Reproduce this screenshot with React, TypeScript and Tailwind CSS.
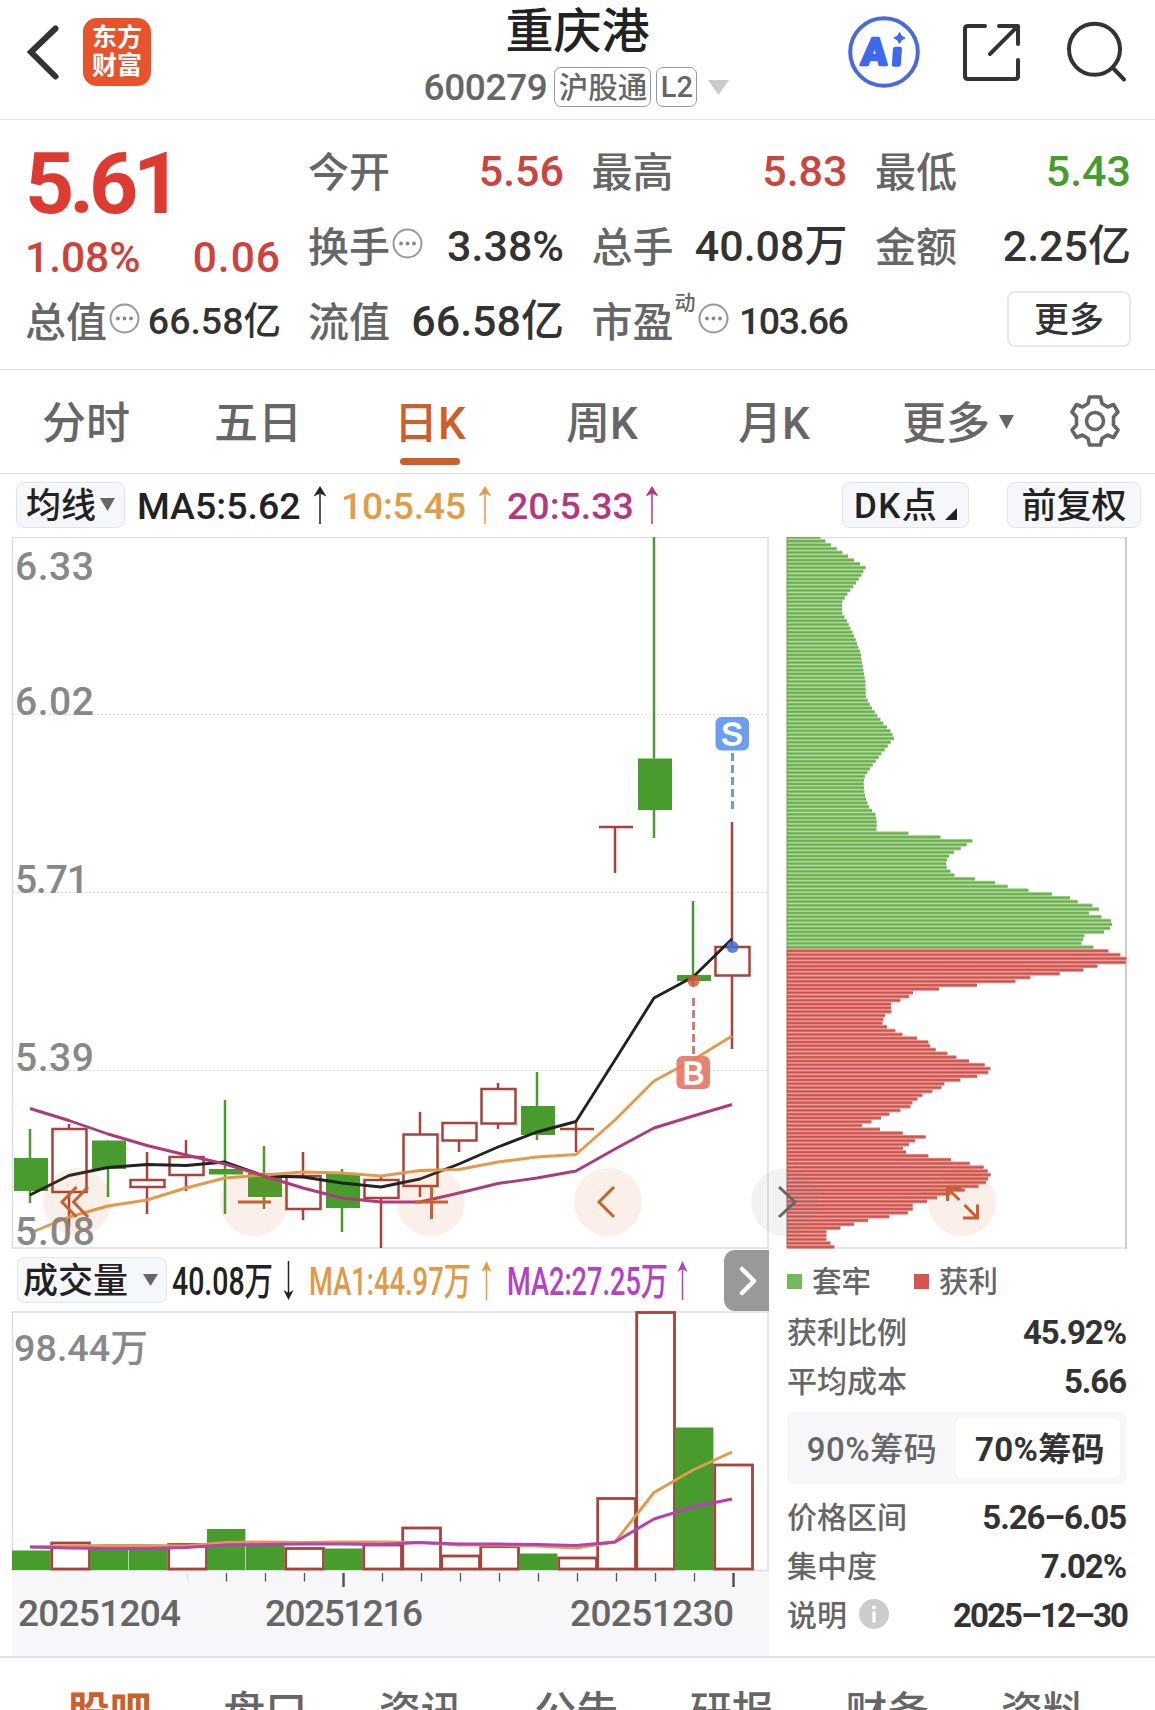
import type { ReactNode } from 'react';

const RED = '#a9423c';
const GREEN = '#489c2d';
const ORANGE = '#c9612f';

// open/close edges of the body and wick range, in chart pixels
const candles = [
  { up: false, top: 1158, bottom: 1191, high: 1129, low: 1203 },
  { up: true, top: 1129, bottom: 1192, high: 1124, low: 1227 },
  { up: false, top: 1140.5, bottom: 1169, high: 1140, low: 1197 },
  { up: true, top: 1180, bottom: 1187, high: 1152, low: 1214 },
  { up: true, top: 1157, bottom: 1175, high: 1140, low: 1191 },
  { up: false, top: 1169, bottom: 1174.5, high: 1100, low: 1214 },
  { up: false, top: 1173, bottom: 1197, high: 1146, low: 1209 },
  { up: true, top: 1176, bottom: 1209, high: 1152, low: 1220 },
  { up: false, top: 1174, bottom: 1208, high: 1169, low: 1232 },
  { up: true, top: 1180, bottom: 1198, high: 1175, low: 1248 },
  { up: true, top: 1134.5, bottom: 1186, high: 1112, low: 1197 },
  { up: true, top: 1123, bottom: 1140.5, high: 1123, low: 1152 },
  { up: true, top: 1089, bottom: 1123.5, high: 1083, low: 1129 },
  { up: false, top: 1106, bottom: 1135, high: 1072, low: 1140 },
  { up: true, top: 1129, bottom: 1129, high: 1123, low: 1152 },
  { up: true, top: 827, bottom: 827, high: 827, low: 873 },
  { up: false, top: 758.5, bottom: 810, high: 537, low: 838 },
  { up: false, top: 975, bottom: 981, high: 901, low: 986 },
  { up: true, top: 947, bottom: 975.5, high: 822, low: 1049 },
];

const ma5 = [1195, 1175.5, 1167.5, 1164.5, 1165.5, 1162, 1176, 1177, 1183, 1187, 1179, 1164, 1147, 1132, 1121.5, 1060, 998, 977, 939];
const ma10 = [1233, 1217, 1206, 1200, 1188, 1178, 1175, 1172, 1173, 1176, 1170.5, 1169.5, 1162, 1157, 1154.5, 1120, 1081, 1060, 1036];
const ma20 = [1108.5, 1120.5, 1134, 1145.5, 1155, 1164, 1176, 1188, 1198, 1202, 1202, 1193, 1183.5, 1178, 1171, 1149, 1128, 1116, 1104.5];

const volumes = [
  [0, 1550.5], [1, 1543], [0, 1546], [0, 1546], [1, 1544.5], [0, 1529], [0, 1545], [1, 1548.5], [0, 1548.5], [1, 1545],
  [1, 1528], [1, 1556], [1, 1546.5], [0, 1553.5], [1, 1558], [1, 1498.5], [1, 1312.5], [0, 1427.5], [1, 1465],
];
const volMa1 = [1547, 1546, 1545.5, 1545.5, 1546, 1542.5, 1542, 1542.5, 1542, 1542, 1542.5, 1545, 1545, 1546, 1548, 1542, 1492.5, 1470, 1452];
const volMa2 = [1547, 1548, 1548.5, 1548.5, 1547.5, 1545, 1544.5, 1544, 1544, 1544.5, 1542.5, 1544, 1544, 1544.5, 1545.5, 1542, 1519, 1507, 1499];

// chip distribution, one value per price step, top price first
const chips = [
  100, 115, 132, 149, 166, 183, 201, 219, 236, 229, 223, 215, 207, 198, 190, 181, 173, 166, 165, 165, 166, 172, 179, 185, 190, 196, 201,
  206, 210, 214, 218, 222, 223, 225, 227, 229, 231, 233, 235, 235, 236, 236, 237, 242, 248, 255, 263, 271, 280, 289, 300, 310, 316, 321,
  311, 302, 293, 283, 275, 266, 257, 249, 241, 234, 231, 230, 231, 232, 234, 237, 241, 246, 255, 265, 267, 269, 269, 268, 364, 460, 556,
  539, 521, 500, 486, 480, 477, 479, 490, 502, 564, 624, 662, 724, 795, 849, 872, 916, 936, 906, 943, 972, 975, 969, 951, 892, 888, 883,
  919, 964, 1000, 1018, 1016, 931, 889, 818, 730, 685, 570, 456, 378, 366, 340, 312, 312, 313, 294, 289, 286, 300, 325, 346, 390, 424,
  429, 446, 481, 508, 546, 593, 610, 603, 570, 520, 472, 463, 436, 406, 391, 376, 370, 340, 307, 282, 253, 225, 279, 347, 416, 384, 366,
  348, 357, 424, 492, 548, 590, 602, 611, 603, 597, 574, 533, 491, 450, 420, 377, 377, 362, 307, 243, 201, 160, 118, 118, 118, 130, 142,
];
const TRAPPED_COUNT = 109;

const cx = (i: number) => 30 + 39 * i;
const toPoints = (ys: number[]) => ys.map((y, i) => `${cx(i)},${y}`).join(' ');

function Arrow({ className = '' }: { className?: string }) {
  return (
    <svg width="14" height="38" viewBox="0 0 14 38" className={className}>
      <path d="M7 5V38" stroke="currentColor" strokeWidth="1.5" />
      <path d="M7 0L13.5 10.5L7 7.5L0.5 10.5Z" fill="currentColor" />
    </svg>
  );
}

function Dots() {
  return (
    <svg width="31" height="31" viewBox="0 0 31 31" className="shrink-0">
      <circle cx="15.5" cy="15.5" r="14" fill="none" stroke="#999" strokeWidth="2" />
      <circle cx="9" cy="15.5" r="1.9" fill="#888" />
      <circle cx="15.5" cy="15.5" r="1.9" fill="#888" />
      <circle cx="22" cy="15.5" r="1.9" fill="#888" />
    </svg>
  );
}

function Triangle({ className }: { className: string }) {
  return (
    <svg viewBox="0 0 16 13" preserveAspectRatio="none" className={className}>
      <path d="M0 0H16L8 13Z" fill="currentColor" />
    </svg>
  );
}

function Header() {
  return (
    <header className="h-[120px] border-b border-[#e3e3e3] flex relative">
      <svg width="36" height="60" viewBox="0 0 36 60" className="ml-[24px] mt-[22px]">
        <path d="M31.500 6.500L7 30L31.500 54.500" fill="none" stroke="#333" strokeWidth="6" strokeLinecap="round" />
      </svg>
      <div className="ml-[23px] mt-[18px] w-[68px] h-[68px] rounded-[14px] bg-[#e8532b] text-white text-[25px] leading-[28px] font-bold text-center pt-[6px]">
        东方<br />财富
      </div>
      <div className="absolute inset-x-0 top-0 pt-[2px] flex flex-col items-center pointer-events-none">
        <h1 className="text-[48px] leading-[60px] font-medium text-[#222]">重庆港</h1>
        <div className="flex items-center h-[50px] -ml-[2px] text-[#666] font-medium">
          <span className="text-[37px] tracking-[-0.4px] pt-[2px]">600279</span>
          <span className="ml-[7px] w-[97px] h-[40px] border-[1.5px] border-[#999] rounded-[7px] text-[29.5px] leading-[40px] text-center">沪股通</span>
          <span className="ml-[5px] w-[41px] h-[40px] border-[1.5px] border-[#999] rounded-[7px] text-[29px] leading-[39px] text-center">L2</span>
          <Triangle className="ml-[11px] w-[21px] h-[15px] text-[#ccc]" />
        </div>
      </div>
      <div className="ml-auto flex">
        <svg width="72" height="72" viewBox="0 0 72 72" className="mt-4">
          <circle cx="36" cy="36" r="33.8" fill="none" stroke="#4a6ad8" strokeWidth="4" />
          <g transform="skewX(-4)" fill="#3f68ee" stroke="#3f68ee" strokeWidth="2.500" strokeLinejoin="round">
            <text x="16" y="49" fontSize="38" fontWeight="900" fontFamily="Roboto" textLength="26" lengthAdjust="spacingAndGlyphs">A</text>
            <rect x="48.500" y="32" width="6.500" height="17.500" rx="1" />
          </g>
          <path d="M51.500 16.500L53.500 20L57 22L53.500 24L51.500 27.500L49.500 24L46 22L49.500 20Z" fill="#3f68ee" stroke="#3f68ee" />
        </svg>
        <svg width="60" height="60" viewBox="0 0 60 60" className="ml-[41px] mt-[22px]" fill="none" stroke="#333" strokeWidth="4" strokeLinecap="round" strokeLinejoin="round">
          <path d="M24 4H7Q4 4 4 7V54Q4 57 7 57H54Q57 57 57 54V38" />
          <path d="M38 4H57V22M56 5L29 32" />
        </svg>
        <svg width="64" height="64" viewBox="0 0 64 64" className="ml-[42px] mr-[28px] mt-[20px]" fill="none" stroke="#333" strokeWidth="4" strokeLinecap="round">
          <circle cx="31.500" cy="29.300" r="25.500" />
          <path d="M50 48L61 59.500" />
        </svg>
      </div>
    </header>
  );
}

function Stat({ label, value, color = 'text-[#333]', dots = false }: { label: string; value: string; color?: string; dots?: boolean }) {
  return (
    <div className="h-[75px] flex items-center">
      <span className="pt-[5px] text-[41px] text-[#666]">{label}</span>
      {dots && <span className="ml-[2px] -mt-[5px]"><Dots /></span>}
      <span className={`ml-auto pt-[2px] text-[43px] font-medium ${color}`}>{value}</span>
    </div>
  );
}

function Quote() {
  return (
    <section className="h-[250px] border-b border-[#e3e3e3] pt-[13px] pl-[25px] flex gap-[27px] leading-none whitespace-nowrap">
      <div className="w-[256px]">
        <div className="h-[94px] pt-[8px] flex items-center text-[86px] font-bold text-[#dd3b32] tracking-[-5.2px]">5.61</div>
        <div className="h-[56px] pt-[7px] flex items-center justify-between text-[42.5px] font-medium text-[#cf4139]">
          <span>1.08%</span>
          <span className="tracking-[1px]">0.06</span>
        </div>
        <div className="h-[75px] flex items-center">
          <span className="pt-[5px] text-[41px] font-medium text-[#666]">总值</span>
          <span className="ml-[2px] -mt-[5px]"><Dots /></span>
          <span className="ml-auto pt-[2px] text-[37.5px] font-medium text-[#333]">66.58亿</span>
        </div>
      </div>
      <div className="grid grid-cols-[256px_256px_256px] auto-rows-[75px] content-start gap-x-[27.5px] font-medium">
        <Stat label="今开" value="5.56" color="text-[#cb453e]" />
        <Stat label="最高" value="5.83" color="text-[#cb453e]" />
        <Stat label="最低" value="5.43" color="text-[#489c2d]" />
        <Stat label="换手" value="3.38%" dots />
        <Stat label="总手" value="40.08万" />
        <Stat label="金额" value="2.25亿" />
        <Stat label="流值" value="66.58亿" />
        <div className="h-[75px] flex items-center">
          <span className="pt-[5px] text-[41px] text-[#666]">市盈</span>
          <span className="text-[21px] text-[#666] ml-[1px] -mt-[35px]">动</span>
          <span className="ml-[2px] -mt-[5px]"><Dots /></span>
          <span className="ml-auto pt-[2px] text-[37.5px] text-[#333] tracking-[-1.4px]">103.66</span>
        </div>
        <div className="h-[75px] flex items-center justify-end">
          <button className="w-[124px] h-[56px] -mt-1 pt-[4px] border-2 border-[#e6e9ec] rounded-[8px] text-[35px] text-[#333]">更多</button>
        </div>
      </div>
    </section>
  );
}

function PeriodTabs() {
  const tabs = ['分时', '五日', '日K', '周K', '月K'];
  return (
    <nav className="h-[104px] border-b border-[#e3e3e3] flex items-stretch text-[44px] leading-none font-medium text-[#666]">
      {tabs.map(t => (
        <div key={t} className={t === '日K' ? 'w-[172px] pt-[4px] flex items-center justify-center relative text-[#cf5f2a]' : 'w-[172px] pt-[4px] flex items-center justify-center'}>
          {t}
          {t === '日K' && <span className="absolute left-[56px] bottom-[8px] w-[60px] h-[7px] rounded-full bg-[#cf5f2a]" />}
        </div>
      ))}
      <div className="ml-[42px] pt-[4px] flex items-center">
        更多<Triangle className="ml-[9px] mb-[4px] w-[15px] h-[14px] text-[#666]" />
      </div>
      <svg width="54" height="54" viewBox="-27 -27 54 54" className="ml-auto mr-[33px] mt-[24px]" fill="none" stroke="#666" strokeWidth="3.600" strokeLinejoin="round">
        <path d="M-5.500 -24H5.500L7 -17.500L12.500 -14L18.500 -16.500L23 -9L18.500 -4V4L23 9L18.500 16.500L12.500 14L7 17.500L5.500 24H-5.500L-7 17.500L-12.500 14L-18.500 16.500L-23 9L-18.500 4V-4L-23 -9L-18.500 -16.500L-12.500 -14L-7 -17.500Z" />
        <circle r="8.500" />
      </svg>
    </nav>
  );
}

function Pill({ className, children }: { className: string; children: ReactNode }) {
  return (
    <button className={`h-[46px] pt-[3px] shrink-0 flex items-center bg-[#f6f7fa] border-[1.5px] border-[#e1e5ea] rounded-[8px] text-[35px] leading-none font-medium text-[#222] ${className}`}>
      {children}
    </button>
  );
}

function MaBar() {
  return (
    <div className="h-[63px] pt-[8px] pl-4 flex items-start whitespace-nowrap">
      <Pill className="w-[109px] pl-[9px]">
        均线<Triangle className="ml-[4px] mb-[4px] w-[15px] h-[13px] text-[#666]" />
      </Pill>
      <div className="h-[46px] ml-[12px] flex items-center text-[37.5px] leading-none font-medium">
        <span className="w-[176px] pt-[3px] text-[#222]">MA5:5.62</span>
        <Arrow className="text-[#222]" />
        <span className="ml-[14px] pt-[3px] w-[137px] text-[#e39b45] tracking-[-0.3px]">10:5.45</span>
        <Arrow className="text-[#e39b45]" />
        <span className="ml-[15px] pt-[3px] w-[138px] text-[#b5387f]">20:5.33</span>
        <Arrow className="text-[#b5387f]" />
      </div>
      <Pill className="ml-auto w-[127px] pl-[11px]">
        <span className="tracking-[1.4px]">DK点</span>
        <svg width="12" height="12" viewBox="0 0 12 12" className="ml-[7px] mt-[15px]"><path d="M12 0V12H0Z" fill="#222" /></svg>
      </Pill>
      <Pill className="ml-[38px] mr-[14px] w-[134px] justify-center">前复权</Pill>
    </div>
  );
}

function KChart() {
  return (
    <svg width="778" height="712" viewBox="0 537 778 712" className="block shrink-0">
      <rect x="12.500" y="537.500" width="755.500" height="710.500" fill="none" stroke="#dedede" strokeWidth="1.500" />
      {[714.5, 892.5, 1070.5].map(y => (
        <path key={y} d={`M13 ${y}H768`} stroke="#dcdcdc" strokeDasharray="2 2" />
      ))}
      {candles.map((c, i) => {
        const x = cx(i);
        const color = c.up ? RED : GREEN;
        return (
          <g key={i} stroke={color} strokeWidth="2.500">
            <path d={`M${x} ${c.high}V${c.top}M${x} ${c.bottom}V${c.low}`} />
            {c.top === c.bottom
              ? <path d={`M${x - 16} ${c.top}H${x + 18}`} />
              : c.up
                ? <rect x={x - 16.5} y={c.top} width="34" height={c.bottom - c.top} fill="#fff" />
                : <rect x={x - 16} y={c.top} width="34" height={c.bottom - c.top} fill={GREEN} stroke="none" />}
          </g>
        );
      })}
      <g fill="none" strokeWidth="2.900" strokeLinejoin="round">
        <polyline points={toPoints(ma5)} stroke="#222" />
        <polyline points={toPoints(ma10)} stroke="#e09c4c" />
        <polyline points={toPoints(ma20)} stroke="#ad3a7f" />
      </g>
      <g fill="#888" fontSize="39" fontWeight="500">
        <text x="15" y="580" textLength="79">6.33</text>
        <text x="15" y="715" textLength="79">6.02</text>
        <text x="15" y="893" textLength="74">5.71</text>
        <text x="15" y="1071" textLength="79">5.39</text>
        <text x="15" y="1245" textLength="80">5.08</text>
      </g>
      <path d="M732.500 753V810" stroke="#6f9bd4" strokeWidth="3" strokeDasharray="8 4" />
      <path d="M693.500 998V1054" stroke="#cb7f72" strokeWidth="3" strokeDasharray="8 4" />
      <circle cx="732.500" cy="947" r="6" fill="#3f6ed8" opacity="0.85" />
      <circle cx="693.500" cy="981" r="6" fill="#dc5a3c" opacity="0.85" />
      <rect x="715.500" y="717" width="33.500" height="33.500" rx="6" fill="#6c9df0" />
      <rect x="676.500" y="1056" width="33.500" height="33" rx="6" fill="#e57665" opacity="0.9" />
      <g fill="#fff" fontSize="32" textAnchor="middle" fontFamily="Liberation Sans, Arial, sans-serif" stroke="#fff" strokeWidth="1.400">
        <text x="732" y="745">S</text>
        <text x="693.500" y="1084">B</text>
      </g>
    </svg>
  );
}

function ChipChart() {
  return (
    <svg width="377" height="712" viewBox="778 537 377 712" className="block shrink-0">
      <path d="M787 537.500H1126M787 1248H1126" stroke="#dedede" strokeWidth="1.500" />
      <path d="M1126 537V1249" stroke="#ccc" strokeWidth="2" />
      {chips.map((v, i) => {
        const y = 537.3 + 3.795 * i;
        const trapped = i < TRAPPED_COUNT;
        return (
          <g key={i}>
            <rect x="787" y={y - 1.9} width={v / 3} height="3.800" fill={trapped ? '#98d17c' : '#ee837d'} />
            <rect x="787" y={y - 0.9} width={v / 3} height="1.800" fill={trapped ? '#70ab57' : '#c35752'} />
          </g>
        );
      })}
      <path d="M787 537V950" stroke="#6da055" />
      <path d="M787 950V1248" stroke="#b0524d" />
    </svg>
  );
}

function ChartControls() {
  const icons = [
    'M33.500 19L19 34L33.500 49M45 19L30.500 34L45 49',
    'M18 34H51',
    'M18 34H51M34.500 18V51',
    'M40 19L25 34L40 49',
    'M28 19L44 34L28 49',
    'M19.500 33V20.500H33M20 21L31.500 32M36.500 37L49 49.500M35 50H49.500V36.500',
  ];
  return (
    <div className="absolute left-[43px] top-[631px] flex gap-[109px]">
      {icons.map((d, i) => (
        <svg key={d} width="68" height="68" viewBox="0 0 68 68">
          <circle cx="34" cy="34" r="34" fill={i === 4 ? '#888' : '#d9682c'} opacity={i === 4 ? 0.11 : 0.1} />
          <path d={d} fill="none" stroke={i === 4 ? '#666' : ORANGE} strokeWidth="3" />
        </svg>
      ))}
    </div>
  );
}

function Volume() {
  return (
    <div className="w-[778px] shrink-0">
      <div className="h-[62px] pl-[17px] pt-[8px] flex items-start whitespace-nowrap">
        <Pill className="w-[150px] pl-[5px]">
          成交量<Triangle className="ml-[15px] mb-[3px] w-[15px] h-[12px] text-[#666]" />
        </Pill>
        <svg width="547" height="46" viewBox="167 1257 547 46" fontSize="38.500" fontWeight="500">
          <g fill="#222"><text x="172" y="1295" textLength="101" lengthAdjust="spacingAndGlyphs">40.08万</text></g>
          <g fill="#e09a45"><text x="309" y="1295" textLength="162" lengthAdjust="spacingAndGlyphs">MA1:44.97万</text></g>
          <g fill="#b541c4"><text x="507" y="1295" textLength="161" lengthAdjust="spacingAndGlyphs">MA2:27.25万</text></g>
          <g strokeWidth="1.500">
            <path d="M288.500 1261V1295" stroke="#222" />
            <path d="M288.500 1300L283.500 1290L288.500 1293L293.500 1290Z" fill="#222" />
            <path d="M486.500 1267V1300" stroke="#e09a45" />
            <path d="M486.500 1261L481.500 1272L486.500 1269L491.500 1272Z" fill="#e09a45" />
            <path d="M682.500 1267V1300" stroke="#b541c4" />
            <path d="M682.500 1261L677.500 1272L682.500 1269L687.500 1272Z" fill="#b541c4" />
          </g>
        </svg>
        <div className="ml-[10px] -mt-[7px] w-[45px] h-[61px] rounded-l-[11px] bg-[#999] flex items-center justify-center">
          <svg width="20" height="32" viewBox="0 0 20 32" className="ml-[3px]"><path d="M4 4L16 16L4 28" fill="none" stroke="#fff" strokeWidth="4.500" strokeLinecap="round" strokeLinejoin="round" /></svg>
        </div>
      </div>
      <svg width="778" height="345" viewBox="0 1311 778 345" className="block">
        <rect x="12" y="1571" width="757" height="85" fill="#f7f7fa" />
        <rect x="12.500" y="1312" width="755.500" height="258.500" fill="none" stroke="#dedede" strokeWidth="1.500" />
        <text x="14" y="1361" fontSize="37.500" fontWeight="500" fill="#888" textLength="134" lengthAdjust="spacingAndGlyphs">98.44万</text>
        {volumes.map(([up, top], i) => up
          ? <rect key={i} x={12.7 + 39 * i} y={top} width="37.800" height={1569 - top} fill="#fff" stroke={RED} strokeWidth="2.800" />
          : <rect key={i} x={12 + 39 * i} y={top} width="38.400" height={1570 - top} fill={GREEN} />)}
        <g fill="none" strokeWidth="3" strokeLinejoin="round">
          <polyline points={toPoints(volMa1)} stroke="#e09c4c" />
          <polyline points={toPoints(volMa2)} stroke="#b541b4" />
        </g>
        {Array.from({ length: 15 }, (_, k) => {
          const major = k === 4 || k === 14;
          return <path key={k} d={`M${187.5 + 39 * k} 1573V${major ? 1587 : 1581.5}`} stroke={k === 0 ? '#e2e2e6' : '#555'} strokeWidth={major ? 2.5 : 1.3} />;
        })}
        <g fill="#666" fontSize="37" fontWeight="500">
          <text x="18" y="1626" textLength="163">20251204</text>
          <text x="265" y="1626" textLength="158">20251216</text>
          <text x="570" y="1626" textLength="164">20251230</text>
        </g>
      </svg>
    </div>
  );
}

function InfoRow({ label, value, icon = false, tight = false }: { label: string; value: string; icon?: boolean; tight?: boolean }) {
  return (
    <div className="h-[49px] flex items-center">
      <span className="text-[#666] text-[30px] font-medium">{label}</span>
      {icon && (
        <svg width="30" height="30" viewBox="0 0 30 30" className="ml-[12px] -mt-[3px]">
          <circle cx="15" cy="15" r="15" fill="#ccc" />
          <path d="M15 13.500V22.500" stroke="#fff" strokeWidth="3.200" strokeLinecap="round" />
          <circle cx="15" cy="8.500" r="2" fill="#fff" />
        </svg>
      )}
      <span className={`ml-auto text-[33px] font-bold text-[#333] ${tight ? 'tracking-[-1.9px] -mr-[1px]' : 'tracking-[-1.1px]'}`}>{value}</span>
    </div>
  );
}

function ChipInfo() {
  return (
    <div className="ml-[9px] w-[339px] pt-[8px] leading-none whitespace-nowrap">
      <div className="h-[51px] flex items-center text-[29.5px] font-medium text-[#666]">
        <span className="w-[15px] h-[15px] -mt-[3px] bg-[#74b857]" />
        <span className="ml-[10px]">套牢</span>
        <span className="ml-[43px] w-[15px] h-[15px] -mt-[3px] bg-[#d4564f]" />
        <span className="ml-[10px]">获利</span>
      </div>
      <InfoRow label="获利比例" value="45.92%" />
      <InfoRow label="平均成本" value="5.66" />
      <div className="mt-[6px] mb-[9px] h-[72px] rounded-[7px] bg-[#f7f7fa] p-[6px] flex text-[33px]">
        <div className="w-[163px] pt-[2px] flex items-center justify-center text-[#666] font-medium pr-[5px] tracking-[0.5px]">90%筹码</div>
        <div className="w-[164px] pt-[2px] flex items-center justify-center text-[#333] font-bold bg-white rounded-[6px] pl-[4px] tracking-[0.3px]">70%筹码</div>
      </div>
      <InfoRow label="价格区间" value="5.26–6.05" />
      <InfoRow label="集中度" value="7.02%" />
      <InfoRow label="说明" value="2025–12–30" icon tight />
    </div>
  );
}

function BottomTabs() {
  const tabs = ['股吧', '盘口', '资讯', '公告', '研报', '财务', '资料'];
  return (
    <nav className="border-t-2 border-[#e3e3e3] pl-[32px] pt-[32px] flex text-[42px] leading-[46px] font-medium text-[#666]">
      {tabs.map((t, i) => (
        <span key={t} className={i === 0 ? 'w-[155.5px] text-center font-bold text-[#cf5f2a]' : 'w-[155.5px] text-center'}>{t}</span>
      ))}
    </nav>
  );
}

export default function App() {
  return (
    <div className="w-[1155px] h-[1710px] overflow-hidden bg-white font-[Roboto,'Noto_Sans_CJK_SC',sans-serif]">
      <Header />
      <Quote />
      <PeriodTabs />
      <MaBar />
      <div className="relative flex">
        <KChart />
        <ChipChart />
        <ChartControls />
      </div>
      <div className="flex h-[407px]">
        <Volume />
        <ChipInfo />
      </div>
      <BottomTabs />
    </div>
  );
}
